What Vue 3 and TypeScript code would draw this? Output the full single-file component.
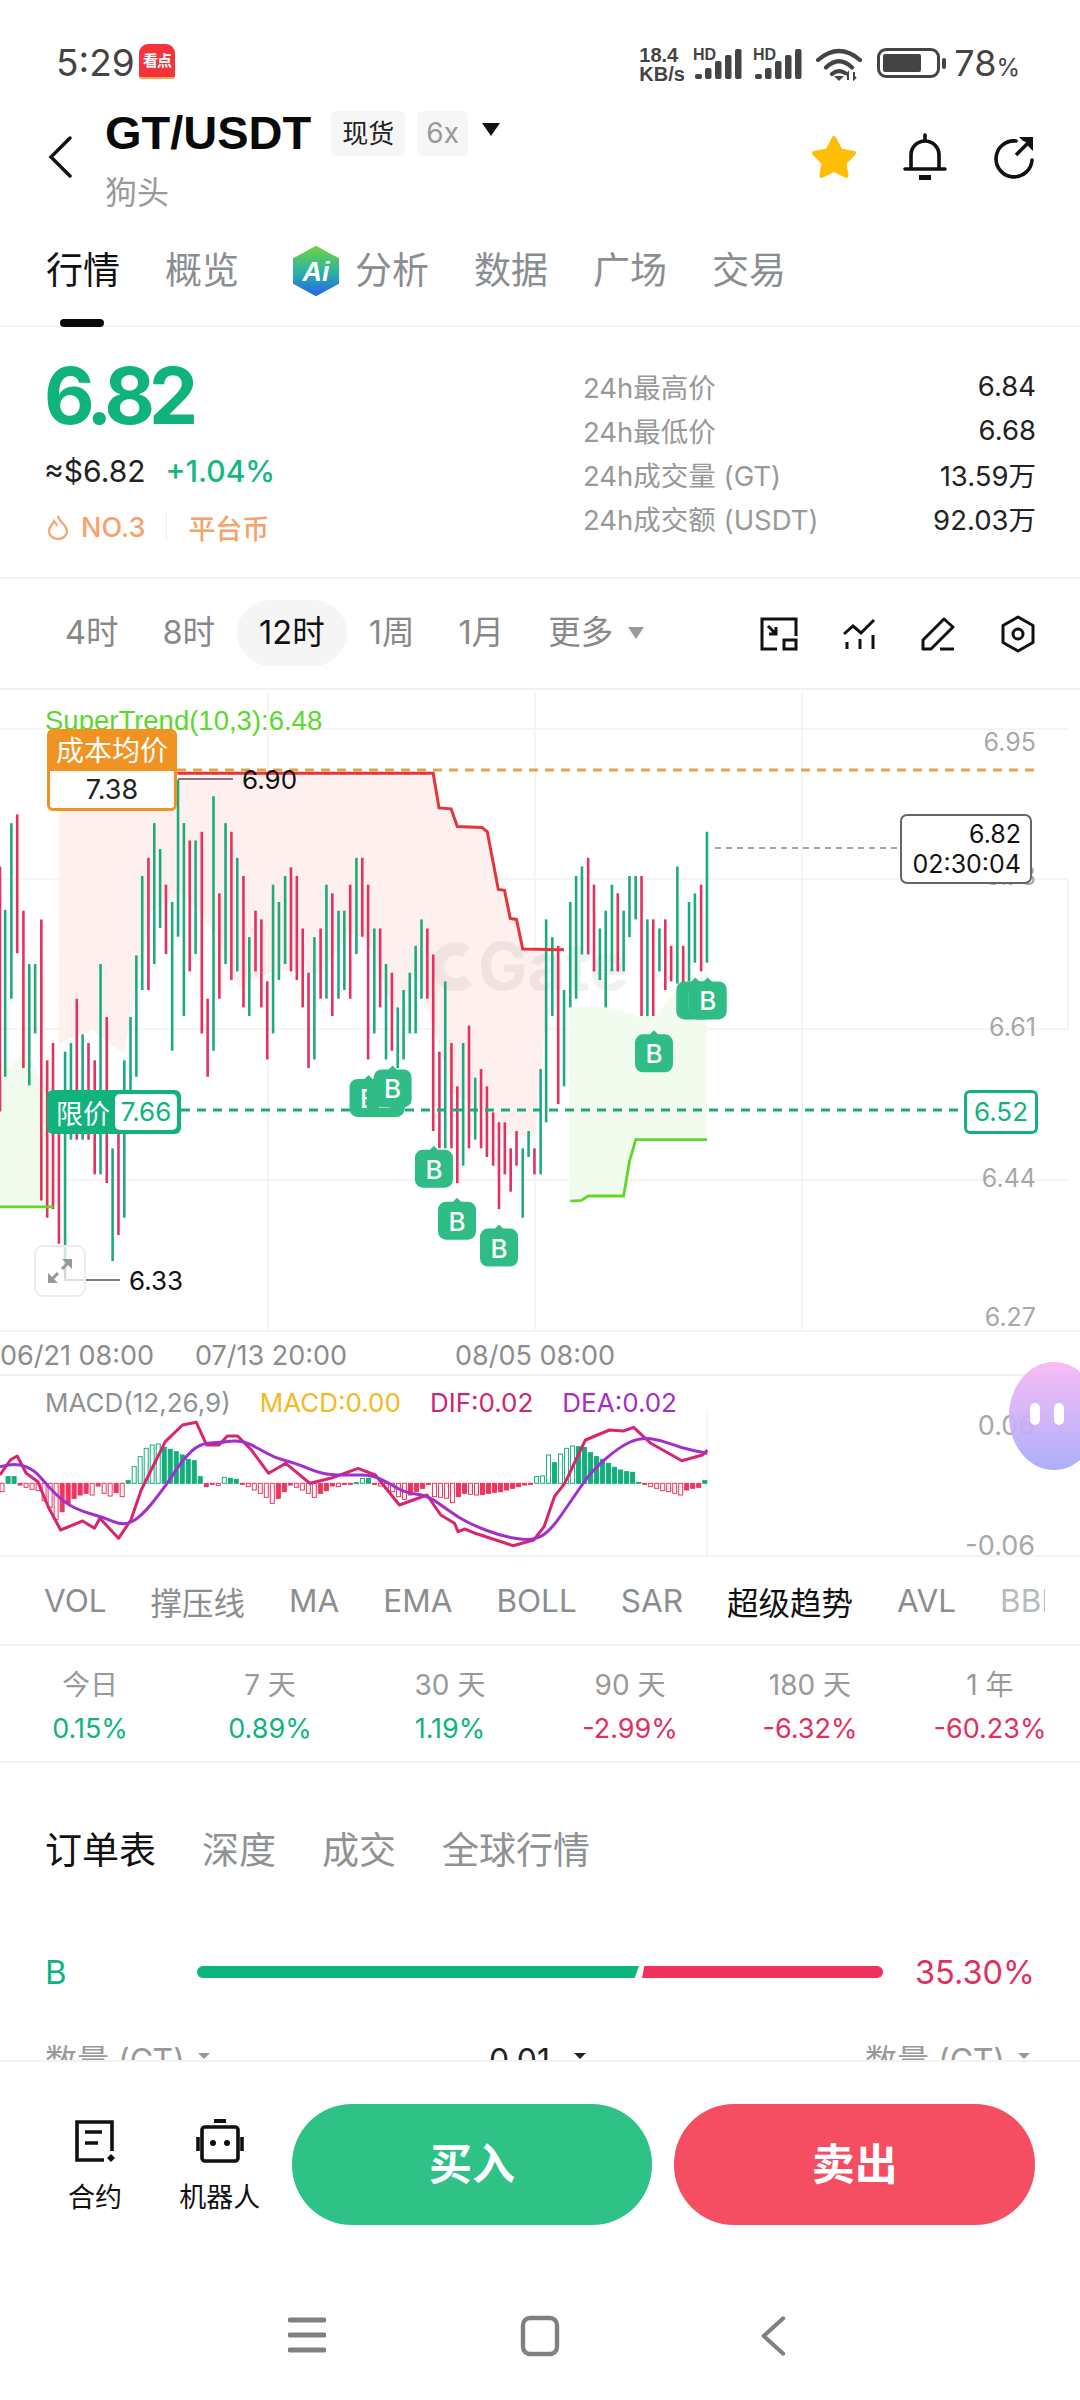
<script setup lang="ts">
type Candle = [number, number, number, number]

// [x, top, bottom, 1 = green / 0 = red] in chart sample units
const raw: Candle[] = [
  [0,430,995,0],[15,530,915,1],[33,330,735,1],[50,310,630,0],[68,532,895,0],[85,655,935,1],[102,655,815,1],[120,552,1200,0],
  [137,877,1240,0],[154,837,1220,0],[171,1040,1300,0],[189,857,1380,1],[206,837,1060,1],[223,735,1060,0],[240,817,1060,1],[257,837,1060,0],
  [275,877,1140,0],[292,655,1140,1],[310,777,1160,0],[327,1080,1340,1],[344,1040,1280,0],[361,877,1240,1],[379,777,1000,1],[396,635,915,1],
  [413,452,715,1],[431,410,715,0],[448,330,655,1],[465,390,572,1],[482,472,632,0],[500,512,855,1],[517,230,592,1],[534,330,775,1],
  [551,370,672,0],[568,370,632,1],[586,350,815,0],[603,735,915,0],[620,268,855,1],[637,492,735,0],[655,330,655,1],[672,350,692,0],
  [689,410,672,1],[707,452,755,0],[724,593,775,1],[742,532,672,0],[759,552,755,0],[776,695,875,0],[793,472,815,1],[810,512,692,1],
  [828,452,655,1],[845,432,672,0],[862,452,692,0],[879,573,755,0],[896,675,895,0],[913,593,875,1],[931,573,735,0],[948,472,735,1],
  [965,492,775,0],[983,532,735,1],[1000,532,715,1],[1017,472,735,0],[1035,410,632,1],[1052,410,592,0],[1069,472,875,0],[1087,573,815,1],
  [1104,573,755,0],[1121,655,875,1],[1138,675,855,0],[1155,755,895,1],[1172,715,875,1],[1190,675,815,1],[1207,613,815,1],[1224,552,735,1],
  [1241,573,735,0],[1258,633,1040,0],[1276,857,1080,0],[1293,695,1080,1],[1311,837,1080,0],[1328,937,1160,0],[1345,837,1120,1],[1362,797,1080,0],
  [1380,917,1060,1],[1397,897,1080,0],[1414,937,1100,0],[1432,997,1120,0],[1449,1020,1220,0],[1466,1020,1140,0],[1483,1080,1180,0],[1500,1040,1120,0],
  [1518,1080,1240,1],[1535,1040,1100,1],[1552,1080,1140,0],[1570,897,1140,1],[1586,552,1020,1],[1604,593,775,1],[1621,613,978,0],[1638,715,937,1],
  [1656,512,755,1],[1673,452,735,1],[1690,430,633,1],[1708,410,633,0],[1725,472,672,0],[1742,573,692,1],[1759,532,755,1],[1777,472,672,1],
  [1794,492,672,0],[1811,532,672,1],[1828,452,593,1],[1846,452,552,1],[1863,452,775,0],[1880,552,775,1],[1897,552,775,0],[1915,573,672,1],
  [1932,552,715,0],[1949,613,695,0],[1967,430,700,1],[1984,613,700,0],[2001,512,695,1],[2018,492,652,1],[2036,472,672,0],[2053,350,652,1],
]

const sx = (x: number): number => x / 2.904
const sy = (y: number): number => 680 + y / 2.306

const candles = raw.map(([x, t, b, g]) => ({
  x: sx(x),
  y1: sy(t),
  y2: sy(b),
  color: g ? '#1DAB7D' : '#E4315F',
}))

const line = (p: number[][], fx: (n: number) => number, fy: (n: number) => number): string =>
  p.map(([x, y]) => `${fx(x).toFixed(1)},${fy(y).toFixed(1)}`).join(' ')

const redLine = line(
  [[515,215],[1258,215],[1275,295],[1310,297],[1328,338],[1400,340],[1415,350],[1447,483],[1465,485],[1482,550],[1500,552],[1518,620],[1638,622]],
  sx, sy,
)
const greenLineL = line([[0,1215],[155,1215]], sx, sy)
const greenLineR = line(
  [[1656,1202],[1688,1200],[1708,1190],[1811,1190],[1828,1110],[1846,1060],[2053,1060]],
  sx, sy,
)

const fx9 = (x: number): number => x / 2.178
const fy9 = (y: number): number => 760 + y / 3
const pinkEdge = line(
  [[1230,568],[1190,570],[1190,760],[1165,1130],[1090,1120],[1040,1040],[985,1000],[945,800],[905,640],[860,760],[800,540],[760,520],[700,640],[600,630],[520,680],[470,520],[400,400],[330,450],[295,700],[270,880],[200,810],[128,850]],
  fx9, fy9,
)
const pinkFill = `${sx(172).toFixed(1)},${sy(215).toFixed(1)} ${redLine} ${pinkEdge}`
const greenFillL = line([[0,950],[50,880],[100,980],[115,1342],[0,1342]], fx9, fy9)
const greenFillR = line(
  [[1240,740],[1320,740],[1395,770],[1425,770],[1470,700],[1540,640],[1540,1138],[1385,1138],[1358,1308],[1280,1308],[1240,1324]],
  fx9, fy9,
)

const gridY = [729, 879, 1029, 1180]
const gridX = [268, 535, 802]
const axis = [
  { t: '6.95', y: 742 },
  { t: '6.61', y: 1027 },
  { t: '6.44', y: 1178 },
  { t: '6.27', y: 1317 },
]

const badges = [
  [1015,920],[1065,920],[1085,898],[1205,1083],[1272,1203],[1394,1265],[1844,817],[1964,695],[2000,695],
].map(([x, y]) => ({ x: sx(x), y: sy(y) }))

// MACD panel, sample coordinates
const mx = (x: number): number => x / 1.452
const my = (y: number): number => y / 3
const dif = line(
  [[0,345],[15,300],[25,288],[38,340],[55,365],[70,440],[88,510],[120,483],[137,505],[145,475],[172,535],[190,480],[205,390],[240,245],[265,195],[285,187],[300,255],[318,255],[330,228],[345,228],[365,270],[390,340],[415,310],[450,370],[480,355],[520,325],[545,345],[580,435],[600,420],[620,405],[640,465],[660,490],[665,515],[675,507],[690,520],[745,557],[775,540],[790,500],[805,410],[820,370],[850,240],[885,210],[905,213],[920,202],[945,250],[990,302],[1020,285],[1027,270]],
  mx, my,
)
const deaPts = [[0,320],[25,310],[50,330],[70,380],[95,430],[120,455],[150,472],[180,498],[205,470],[240,380],[265,300],[290,250],[320,248],[350,240],[375,265],[400,295],[430,310],[470,345],[510,345],[540,345],[565,370],[590,400],[620,405],[650,450],[680,490],[730,530],[775,543],[800,510],[830,420],[860,330],[900,260],[930,232],[960,240],[990,265],[1027,280]]
const dea = deaPts.reduce((d, [x, y], i) => {
  if (i === 0) return `M${mx(x).toFixed(1)} ${my(y).toFixed(1)}`
  const [px, py] = deaPts[i - 1]
  const cx = (mx(x) + mx(px)) / 2
  const cy = (my(y) + my(py)) / 2
  return `${d}Q${mx(px).toFixed(1)} ${my(py).toFixed(1)} ${cx.toFixed(1)} ${cy.toFixed(1)}`
}, '') + `L${mx(1027).toFixed(1)} ${my(280).toFixed(1)}`
const histRaw = [
  -25,20,20,-5,-12,-18,-22,-52,-72,-108,-85,-60,-45,-35,-30,-35,-8,-30,-38,-28,-40,8,50,80,105,115,118,108,102,95,85,72,68,20,-10,-1,-6,18,15,12,
  -2,-10,-20,-30,-42,-60,-45,-25,-5,-12,-20,-30,-42,-30,-22,-8,-10,-3,-1,2,15,15,-3,-8,-15,-25,-40,-48,-35,-25,-15,-3,-40,-42,-45,-58,-40,-30,-33,-35,
  -34,-30,-27,-25,-20,-15,-10,-5,-3,20,22,85,62,88,105,112,110,108,92,80,72,60,48,40,35,33,3,-1,-10,-15,-22,-25,-30,-35,-20,-15,-12,8,
]
const hist = histRaw.map((h, i) => {
  const prev = i ? Math.abs(histRaw[i - 1]) : 0
  const hollow = Math.abs(h) > prev
  const top = h > 0 ? 370 - h : 370
  const color = h > 0 ? '#12AE7C' : '#EE3560'
  return {
    x: mx(i * 8.72 + 3) - 2,
    y: my(top),
    h: Math.abs(h) / 3,
    fill: hollow ? '#fff' : color,
    stroke: color,
  }
})

const tabs = ['概览', '分析', '数据', '广场', '交易']
const stats = [
  { l: '24h最高价', v: '6.84' },
  { l: '24h最低价', v: '6.68' },
  { l: '24h成交量 (GT)', v: '13.59万' },
  { l: '24h成交额 (USDT)', v: '92.03万' },
]
const indicators = ['VOL', '撑压线', 'MA', 'EMA', 'BOLL', 'SAR', '超级趋势', 'AVL', 'BBI']
const returns = [
  { l: '今日', v: '0.15%', up: true },
  { l: '7 天', v: '0.89%', up: true },
  { l: '30 天', v: '1.19%', up: true },
  { l: '90 天', v: '-2.99%', up: false },
  { l: '180 天', v: '-6.32%', up: false },
  { l: '1 年', v: '-60.23%', up: false },
]
</script>

<template>
  <div class="page">
    <div class="status">
      <span class="time">5:29</span>
      <div class="app-badge"><span>看点</span></div>
      <div class="status-right">
        <div class="speed"><span>18.4</span><span>KB/s</span></div>
        <svg class="sig" viewBox="0 0 50 32" width="50" height="32">
          <text x="0" y="12" class="hd">HD</text>
          <rect x="2" y="26" width="7" height="5" rx="2" />
          <rect x="12" y="20" width="6.5" height="11" rx="2" />
          <rect x="22" y="13" width="6.5" height="18" rx="2" />
          <rect x="32" y="7" width="6.5" height="24" rx="2" />
          <rect x="42" y="1" width="6.5" height="30" rx="2" />
        </svg>
        <svg class="sig" viewBox="0 0 50 32" width="50" height="32">
          <text x="0" y="12" class="hd">HD</text>
          <rect x="2" y="26" width="7" height="5" rx="2" />
          <rect x="12" y="20" width="6.5" height="11" rx="2" />
          <rect x="22" y="13" width="6.5" height="18" rx="2" />
          <rect x="32" y="7" width="6.5" height="24" rx="2" />
          <rect x="42" y="1" width="6.5" height="30" rx="2" />
        </svg>
        <svg class="wifi" viewBox="0 0 46 34" width="46" height="34">
          <path d="M2 13Q23-5 44 13M10 20.500Q23 8 36 20.500M16 27Q22 22 29 26" fill="none" stroke="#444" stroke-width="4.200" stroke-linecap="round" />
          <path d="M18 29h10l-5 5z" fill="#444" />
          <path d="M32 33v-7l-2 2M38 25v7l2-2" fill="none" stroke="#444" stroke-width="2" />
        </svg>
        <div class="battery"><i></i></div>
        <b class="nub"></b>
        <span class="pct">78<small>%</small></span>
      </div>
    </div>

    <div class="header">
      <svg class="back" viewBox="0 0 26 42" width="26" height="42">
        <path d="M23 2L4 21l19 19" fill="none" stroke="#111" stroke-width="3.400" stroke-linecap="round" />
      </svg>
      <div class="title-block">
        <div class="title-line">
          <span class="pair">GT/USDT</span>
          <span class="chip">现货</span>
          <span class="chip gray">6x</span>
          <i class="caret"></i>
        </div>
        <div class="cn-name">狗头</div>
      </div>
      <div class="head-icons">
        <svg viewBox="0 0 48 48" width="48" height="48">
          <polygon points="24,5 30.500,17.500 44,20 34.500,30 36.500,43 24,37 11.500,43 13.500,30 4,20 17.500,17.500" fill="#FDBE05" stroke="#FDBE05" stroke-width="4" stroke-linejoin="round" />
        </svg>
        <svg viewBox="0 0 44 48" width="44" height="48">
          <path d="M22 2v5M8 36V22a14 14 0 0 1 28 0v14M2 36h40" fill="none" stroke="#111" stroke-width="3.600" stroke-linecap="round" />
          <rect x="16" y="42" width="12" height="5" fill="#111" />
        </svg>
        <svg viewBox="0 0 44 44" width="44" height="44">
          <path d="M24 6A18 18 0 1 0 40 25" fill="none" stroke="#111" stroke-width="3.600" stroke-linecap="round" />
          <path d="M24 20L36 8" stroke="#111" stroke-width="3.600" />
          <path d="M27 2H41V16L36 11 34 7 31 6z" fill="#111" />
        </svg>
      </div>
    </div>

    <div class="tabs">
      <span class="tab active">行情<i class="ind"></i></span>
      <template v-for="t in tabs" :key="t">
        <svg v-if="t === '分析'" class="ai" viewBox="0 0 48 50" width="48" height="50">
          <defs>
            <linearGradient id="aig" x1="0" y1="0" x2="0" y2="1">
              <stop offset="0" stop-color="#6FD13F" />
              <stop offset="0.5" stop-color="#2CB5A0" />
              <stop offset="1" stop-color="#2468E8" />
            </linearGradient>
          </defs>
          <path d="M24 1L46 13V37L24 49 2 37V13z" fill="url(#aig)" stroke="url(#aig)" stroke-width="2" stroke-linejoin="round" />
          <text x="24" y="35" class="ai-text">Ai</text>
        </svg>
        <span class="tab">{{ t }}</span>
      </template>
    </div>

    <div class="summary">
      <div class="sum-left">
        <div class="big">6.82</div>
        <div class="sub"><span class="usd">≈$6.82</span><span class="chg">+1.04%</span></div>
        <div class="rank">
          <svg viewBox="0 0 22 26" width="22" height="26">
            <path d="M11 2C12 8 20 11 20 17A9 8 0 0 1 2 17C2 12 6 11 7 7 9 9 10 10 10 12" fill="none" stroke="#F5A36C" stroke-width="2.200" />
          </svg>
          <span class="no">NO.3</span>
          <i class="rank-sep"></i>
          <span class="no">平台币</span>
        </div>
      </div>
      <div class="sum-right">
        <div v-for="s in stats" :key="s.l" class="stat">
          <span class="stat-l">{{ s.l }}</span><span class="stat-v">{{ s.v }}</span>
        </div>
      </div>
    </div>

    <div class="timebar">
      <span class="tf">4时</span>
      <span class="tf">8时</span>
      <span class="tf on">12时</span>
      <span class="tf">1周</span>
      <span class="tf">1月</span>
      <span class="tf more">更多<i class="caret small"></i></span>
      <div class="tools">
        <svg viewBox="0 0 38 34" width="38" height="34">
          <path d="M17 32H2V2H36V19M8 9l8 8M16 10v7H9" fill="none" stroke="#111" stroke-width="3" />
          <rect x="24" y="23" width="12" height="9" fill="none" stroke="#111" stroke-width="3" />
        </svg>
        <svg viewBox="0 0 34 34" width="34" height="34">
          <path d="M2 17L11 9l8 7L32 3" fill="none" stroke="#111" stroke-width="3" />
          <path d="M5 25v7M18 22v10M31 18v14" stroke="#111" stroke-width="3" />
        </svg>
        <svg viewBox="0 0 36 34" width="36" height="34">
          <path d="M3 23L24 2 33 10 11 32H3zM20 32H34" fill="none" stroke="#111" stroke-width="3" stroke-linejoin="round" />
        </svg>
        <svg viewBox="0 0 36 38" width="36" height="38">
          <path d="M18 2L33 10.500V27.500L18 36 3 27.500V10.500z" fill="none" stroke="#111" stroke-width="3" stroke-linejoin="round" />
          <circle cx="18" cy="19" r="5" fill="none" stroke="#111" stroke-width="3" />
        </svg>
      </div>
    </div>

    <div class="chart">
      <svg class="chart-svg" viewBox="0 690 1080 640" width="1080" height="640">
        <line v-for="y in gridY" :key="'gy' + y" x1="0" x2="1068" :y1="y" :y2="y" class="grid" />
        <line v-for="x in gridX" :key="'gx' + x" :x1="x" :x2="x" y1="692" y2="1330" class="grid" />
        <line x1="1068" x2="1068" y1="879" y2="1029" class="grid" />
        <polygon :points="pinkFill" fill="#FEF0EF" />
        <polygon :points="greenFillL" fill="#F2FCEE" />
        <polygon :points="greenFillR" fill="#F2FCEE" />
        <path d="M466 952A18 18 0 1 0 468 980" class="mark-logo" />
        <text x="478" y="990" class="mark">Gate</text>
        <text x="45" y="730" class="st">SuperTrend(10,3):6.48</text>
        <line v-for="(c, i) in candles" :key="i" :x1="c.x" :x2="c.x" :y1="c.y1" :y2="c.y2" :stroke="c.color" stroke-width="2.600" />
        <polyline :points="redLine" class="red-line" />
        <polyline :points="greenLineL" class="green-line" />
        <polyline :points="greenLineR" class="green-line" />
        <line x1="177" x2="1036" y1="770" y2="770" class="dash-o" />
        <line x1="181" x2="964" y1="1110" y2="1110" class="dash-g" />
        <line x1="715" x2="900" y1="848" y2="848" class="dash-k" />
        <path d="M178 779H233" class="lead" />
        <path d="M65 1260V1280H120" class="lead" />
        <text x="242" y="789" class="val">6.90</text>
        <text x="129" y="1290" class="val">6.33</text>
        <text v-for="a in axis" :key="a.t" x="1036" :y="a.y + 9" class="ax">{{ a.t }}</text>
        <text x="1036" y="885" class="ax">6.78</text>
        <g v-for="(b, i) in badges" :key="'b' + i">
          <path :d="`M${b.x + 14} ${b.y + 1}L${b.x + 19} ${b.y - 4}L${b.x + 24} ${b.y + 1}Z`" fill="#2FBC85" />
          <rect :x="b.x" :y="b.y" width="38" height="38" rx="8" fill="#2FBC85" />
          <text :x="b.x + 19" :y="b.y + 29" class="b-text">B</text>
        </g>
      </svg>

      <div class="cost-tag">
        <div class="cost-top">成本均价</div>
        <div class="cost-val">7.38</div>
      </div>
      <div class="limit-tag">
        <span class="limit-l">限价</span>
        <span class="limit-v">7.66</span>
      </div>
      <div class="limit-right">6.52</div>
      <div class="now-tag"><span>6.82</span><span>02:30:04</span></div>
      <div class="expand">
        <svg viewBox="0 0 28 28" width="28" height="28">
          <path d="M16 12L25 3M3 25l9-9" stroke="#999" stroke-width="3" />
          <path d="M16 2H26V12zM2 16V26H12z" fill="#999" />
        </svg>
      </div>
    </div>

    <div class="dates">
      <span class="d1">06/21 08:00</span>
      <span class="d2">07/13 20:00</span>
      <span class="d3">08/05 08:00</span>
    </div>

    <div class="macd">
      <div class="macd-legend">
        <span class="mg">MACD(12,26,9)</span>
        <span class="mo">MACD:0.00</span>
        <span class="mp">DIF:0.02</span>
        <span class="mv">DEA:0.02</span>
      </div>
      <svg class="macd-svg" viewBox="0 0 1080 197" width="1080" height="197">
        <line x1="707" x2="707" y1="50" y2="197" class="grid" />
        <rect v-for="(h, i) in hist" :key="i" :x="h.x" :y="h.y" width="4" :height="Math.max(h.h, 1)" :fill="h.fill" :stroke="h.stroke" stroke-width="1" />
        <polyline :points="dif" class="dif" />
        <path :d="dea" class="dea" />
        <text x="1035" y="75" class="ax big-ax">0.06</text>
        <text x="1035" y="195" class="ax big-ax">-0.06</text>
      </svg>
    </div>

    <div class="indicators">
      <span v-for="n in indicators" :key="n" :class="['ind-item', { current: n === '超级趋势' }]">{{ n }}</span>
    </div>

    <div class="returns">
      <div v-for="r in returns" :key="r.l" class="ret">
        <span class="ret-l">{{ r.l }}</span>
        <span :class="['ret-v', r.up ? 'up' : 'down']">{{ r.v }}</span>
      </div>
    </div>

    <div class="book">
      <div class="book-tabs">
        <span class="bt on">订单表</span>
        <span class="bt">深度</span>
        <span class="bt">成交</span>
        <span class="bt">全球行情</span>
      </div>
      <div class="ratio">
        <span class="ratio-b">B</span>
        <div class="ratio-bar"><i class="bar-g"></i><i class="bar-r"></i></div>
        <span class="ratio-v">35.30%</span>
      </div>
      <div class="book-head">
        <span>数量 (GT)<i class="caret tiny"></i></span>
        <span class="mid">0.01<i class="caret tiny dark"></i></span>
        <span>数量 (GT)<i class="caret tiny"></i></span>
      </div>
    </div>

    <div class="actions">
      <div class="act">
        <svg viewBox="0 0 42 44" width="42" height="44">
          <path d="M30 41H3V3H38V32" fill="none" stroke="#111" stroke-width="3.600" />
          <path d="M11 13H28M11 24H24" stroke="#111" stroke-width="3.600" />
          <path d="M37 35L41 39 37 43 33 39z" fill="#111" />
        </svg>
        <span>合约</span>
      </div>
      <div class="act">
        <svg viewBox="0 0 48 44" width="48" height="44">
          <rect x="18" y="0" width="12" height="4" fill="#111" />
          <rect x="6" y="8" width="36" height="34" rx="3" fill="none" stroke="#111" stroke-width="3.600" />
          <path d="M2 18V32M46 18V32" stroke="#111" stroke-width="3.600" />
          <circle cx="17" cy="24" r="3" fill="#111" />
          <circle cx="31" cy="24" r="3" fill="#111" />
        </svg>
        <span>机器人</span>
      </div>
      <div class="btn buy">买入</div>
      <div class="btn sell">卖出</div>
    </div>

    <div class="nav">
      <svg viewBox="0 0 38 38" width="38" height="38">
        <path d="M2 4H36M2 19H36M2 34H36" stroke="#808080" stroke-width="5" stroke-linecap="round" />
      </svg>
      <svg viewBox="0 0 40 42" width="40" height="42">
        <rect x="3" y="3" width="34" height="36" rx="7" fill="none" stroke="#808080" stroke-width="4.400" />
      </svg>
      <svg viewBox="0 0 28 42" width="26" height="42">
        <path d="M25 2L4 21l21 19" fill="none" stroke="#808080" stroke-width="4.400" stroke-linecap="round" stroke-linejoin="round" />
      </svg>
    </div>

    <div class="bubble"><i></i><i></i></div>
  </div>
</template>

<style scoped>
.page {
  position: relative;
  width: 1080px;
  height: 2400px;
  overflow: hidden;
  background: #fff;
  color: #111;
  font-family: Inter, "Noto Sans CJK SC", sans-serif;
  display: flex;
  flex-direction: column;
}
svg { display: block; flex: none; }
i { display: block; }

.status {
  height: 100px;
  flex: none;
  display: flex;
  align-items: flex-start;
  padding: 44px 60px 0 56px;
  box-sizing: border-box;
  color: #444;
}
.time { font-size: 37px; line-height: 38px; width: 83px; color: #444; }
.app-badge {
  width: 36px;
  height: 33px;
  border-radius: 9px 9px 3px 3px;
  background: #F4333B;
  border-bottom: 2px solid #F8A64A;
  display: flex;
  align-items: center;
  justify-content: center;
  color: #fff;
  font-size: 15px;
  font-weight: 700;
  line-height: 1;
  white-space: nowrap;
}
.app-badge span { letter-spacing: -1px; }
.status-right { margin-left: auto; display: flex; align-items: flex-start; }
.speed {
  display: flex;
  flex-direction: column;
  font: 700 20px/19px "Liberation Sans", sans-serif;
  width: 54px;
  margin-top: 2px;
  color: #444;
}
.sig { margin-top: 4px; margin-right: 10px; fill: #444; }
.hd { font: 700 16px "Liberation Sans", sans-serif; fill: #444; }
.wifi { margin: 3px 15px 0 3px; }
.battery {
  width: 63px;
  height: 30px;
  box-sizing: border-box;
  border: 3px solid #444;
  border-radius: 9px;
  margin-top: 4px;
  padding: 3px;
}
.battery i { width: 38px; height: 18px; background: #444; border-radius: 2px; }
.nub { width: 4px; height: 11px; background: #444; border-radius: 2px; margin: 14px 8px 0 2px; }
.pct { font-size: 36px; line-height: 38px; margin-top: 0; color: #444; font-weight: 400; }
.pct small { font-size: 24px; }

.header {
  height: 130px;
  flex: none;
  position: relative;
  display: flex;
  padding-left: 47px;
  box-sizing: border-box;
}
.back { margin-top: 36px; margin-right: 32px; }
.title-line { display: flex; align-items: center; height: 58px; margin-top: 4px; }
.pair { font: 700 47px/58px "Liberation Sans", sans-serif; color: #0a0a0a; margin-right: 20px; }
.chip {
  height: 45px;
  line-height: 45px;
  padding: 0 11px;
  border-radius: 6px;
  background: #F6F6F6;
  font-size: 26px;
  color: #222;
  margin-right: 12px;
}
.chip.gray { color: #999; font-size: 28px; padding: 0 9px; }
.caret {
  width: 0;
  height: 0;
  border-left: 9px solid transparent;
  border-right: 9px solid transparent;
  border-top: 13px solid #111;
  margin-left: 2px;
  margin-bottom: 8px;
}
.caret.small { border-top-color: #999; border-left-width: 8px; border-right-width: 8px; border-top-width: 12px; margin: 0 0 0 15px; }
.caret.tiny {
  display: inline-block;
  border-left-width: 6px;
  border-right-width: 6px;
  border-top: 6px solid #999;
  margin: 0 0 0 13px;
  vertical-align: 13px;
}
.caret.tiny.dark { border-top-color: #222; margin-left: 24px; }
.cn-name { font-size: 32px; line-height: 40px; color: #999; margin-top: 11px; }
.head-icons {
  position: absolute;
  left: 810px;
  top: 33px;
  width: 226px;
  display: flex;
  align-items: center;
  justify-content: space-between;
}

.tabs {
  height: 97px;
  flex: none;
  box-sizing: border-box;
  border-bottom: 2px solid #F4F4F4;
  padding: 0 0 0 46px;
  display: flex;
  align-items: flex-start;
}
.tab {
  position: relative;
  font-size: 37px;
  line-height: 44px;
  margin-top: 19px;
  margin-right: 45px;
  color: #8A8E91;
  white-space: nowrap;
}
.tab.active { color: #111; }
.ind { position: absolute; left: 14px; top: 70px; width: 44px; height: 8px; border-radius: 4px; background: #0a0a0a; }
.ai { margin: 16px 15px 0 8px; }
.ai-text { font: italic 700 27px "Liberation Sans", sans-serif; fill: #fff; text-anchor: middle; }

.summary {
  height: 252px;
  flex: none;
  box-sizing: border-box;
  border-bottom: 2px solid #F3F3F3;
  padding: 0 44px;
  display: flex;
  justify-content: space-between;
}
.big {
  font-size: 78px;
  line-height: 80px;
  font-weight: 700;
  color: #10B27E;
  margin-top: 29px;
  letter-spacing: -6px;
}
.sub { display: flex; align-items: center; margin-top: 15px; height: 40px; }
.usd { font-size: 30px; color: #222; margin-right: 20px; }
.chg { font-size: 30px; color: #15B683; font-weight: 500; }
.rank { display: flex; align-items: center; margin-top: 21px; height: 30px; margin-left: 3px; }
.no { font-size: 27px; color: #F5A36C; font-weight: 500; }
.rank svg { margin-right: 12px; }
.rank-sep { width: 1px; height: 28px; background: #eee; margin: 0 21px; }
.sum-right { width: 453px; padding-top: 37px; }
.stat {
  display: flex;
  justify-content: space-between;
  align-items: center;
  height: 44px;
  font-size: 27.5px;
}
.stat-l { color: #999; }
.stat-v { color: #222; }

.timebar {
  height: 111px;
  flex: none;
  box-sizing: border-box;
  border-bottom: 2px solid #F3F3F3;
  padding: 0 44px 0 43px;
  display: flex;
  align-items: center;
}
.tf {
  height: 66px;
  line-height: 66px;
  padding: 0 22px;
  margin-top: -2px;
  font-size: 32.5px;
  color: #888;
  white-space: nowrap;
  display: flex;
  align-items: center;
}
.tf.on { background: #F5F5F5; border-radius: 33px; color: #111; }
.tools { margin-left: auto; margin-right: 0; display: flex; align-items: center; gap: 44px; }

.chart { position: relative; height: 640px; flex: none; border-bottom: 2px solid #F5F5F5; box-sizing: content-box; }
.chart-svg { position: absolute; left: 0; top: 0; }
.grid { stroke: #F2F2F2; stroke-width: 1.500; }
.mark { font: 700 66px Inter, sans-serif; fill: #000; opacity: 0.05; }
.mark-logo { fill: none; stroke: #000; stroke-width: 13; opacity: 0.05; }
.st { font: 400 27.5px "Liberation Sans", sans-serif; fill: #5BD82D; }
.red-line { fill: none; stroke: #E3353A; stroke-width: 3; }
.green-line { fill: none; stroke: #5FD72C; stroke-width: 2.800; }
.dash-o { stroke: #E3A24B; stroke-width: 3; stroke-dasharray: 9 7; }
.dash-g { stroke: #1DAB7D; stroke-width: 3; stroke-dasharray: 9 7; }
.dash-k { stroke: #888; stroke-width: 1.500; stroke-dasharray: 6 5; }
.lead { fill: none; stroke: #555; stroke-width: 1.500; }
.val { font: 400 26px Inter, sans-serif; fill: #111; }
.ax { font: 400 25px Inter, sans-serif; fill: #A8A8A8; text-anchor: end; }
.big-ax { font-size: 27px; }
.b-text { font: 500 26px Inter, sans-serif; fill: #fff; text-anchor: middle; }

.cost-tag {
  position: absolute;
  left: 47px;
  top: 39px;
  width: 130px;
  height: 82px;
  box-sizing: border-box;
  border: 3px solid #F19322;
  border-radius: 6px;
  background: #fff;
  overflow: hidden;
  text-align: center;
}
.cost-top { background: #F19322; color: #fff; font-size: 28px; line-height: 39px; height: 39px; white-space: nowrap; }
.cost-val { font-size: 27px; line-height: 38px; color: #222; }
.limit-tag {
  position: absolute;
  left: 47px;
  top: 400px;
  width: 134px;
  height: 44px;
  box-sizing: border-box;
  background: #10B27E;
  border-radius: 6px;
  display: flex;
  align-items: center;
  padding: 4px;
}
.limit-l { width: 64px; text-align: center; color: #fff; font-size: 27px; }
.limit-v {
  flex: 1;
  height: 36px;
  line-height: 36px;
  background: #fff;
  border-radius: 5px;
  color: #10B27E;
  text-align: center;
  font-size: 26px;
}
.limit-right {
  position: absolute;
  left: 964px;
  top: 400px;
  width: 74px;
  height: 44px;
  box-sizing: border-box;
  border: 3px solid #10B27E;
  border-radius: 6px;
  background: #fff;
  color: #10B27E;
  font-size: 26px;
  line-height: 38px;
  text-align: center;
}
.now-tag {
  position: absolute;
  left: 900px;
  top: 124px;
  width: 132px;
  height: 70px;
  box-sizing: border-box;
  border: 2px solid #666;
  border-radius: 7px;
  background: #fff;
  display: flex;
  flex-direction: column;
  align-items: flex-end;
  justify-content: center;
  padding-right: 9px;
  font-size: 25px;
  line-height: 30px;
  color: #111;
}
.expand {
  position: absolute;
  left: 34px;
  top: 555px;
  width: 52px;
  height: 52px;
  box-sizing: border-box;
  border: 2px solid #EDEDED;
  border-radius: 9px;
  background: rgba(255, 255, 255, 0.75);
  display: flex;
  align-items: center;
  justify-content: center;
}

.dates {
  height: 44px;
  flex: none;
  box-sizing: border-box;
  border-bottom: 2px solid #F3F3F3;
  padding-top: 4px;
  display: flex;
  align-items: center;
  font-size: 27px;
  color: #8C8C8C;
  white-space: nowrap;
}
.d1 { width: 195px; }
.d2 { width: 260px; }

.macd { position: relative; height: 181px; flex: none; border-bottom: 2px solid #F3F3F3; box-sizing: border-box; }
.macd-svg { position: absolute; left: 0; top: -16px; }
.macd-legend {
  position: absolute;
  left: 45px;
  top: 11px;
  display: flex;
  gap: 29px;
  font-size: 26px;
  line-height: 32px;
  white-space: nowrap;
  z-index: 1;
}
.mg { color: #8F9294; }
.mo { color: #F4B91E; }
.mp { color: #D0246E; }
.mv { color: #A62FC6; }
.dif { fill: none; stroke: #D9246F; stroke-width: 3; stroke-linejoin: round; }
.dea { fill: none; stroke: #A02FCB; stroke-width: 3; stroke-linejoin: round; }

.indicators {
  height: 89px;
  flex: none;
  box-sizing: border-box;
  border-bottom: 2px solid #F3F3F3;
  width: 1080px;
  padding: 0 0 0 44px;
  display: flex;
  align-items: center;
  gap: 44px;
  overflow: hidden;
  font-size: 31.5px;
  color: #8A8E91;
  white-space: nowrap;
}
.ind-item { flex: none; }
.ind-item:last-child { width: 45px; overflow: hidden; opacity: 0.6; }
.ind-item.current { color: #111; }

.returns {
  height: 117px;
  flex: none;
  box-sizing: border-box;
  border-bottom: 2px solid #F3F3F3;
  display: grid;
  grid-template-columns: repeat(6, 180px);
}
.ret { display: flex; flex-direction: column; align-items: center; padding-top: 20px; white-space: nowrap; }
.ret-l { font-size: 28px; line-height: 38px; color: #999; }
.ret-v { font-size: 27px; line-height: 38px; margin-top: 6px; }
.up { color: #10B27E; }
.down { color: #E0305F; }

.book { height: 297px; flex: none; overflow: hidden; padding: 0 50px 0 45px; box-sizing: border-box; }
.book-tabs { display: flex; gap: 46px; margin-top: 65px; height: 46px; align-items: center; }
.bt { font-size: 37px; line-height: 46px; color: #8F9294; white-space: nowrap; }
.bt.on { color: #111; }
.ratio { display: flex; align-items: center; margin-top: 78px; height: 40px; margin-right: -5px; }
.ratio-b { width: 152px; font-size: 33px; color: #10B27E; }
.ratio-bar { width: 686px; display: flex; gap: 3px; height: 12px; }
.bar-g { width: 442px; background: #0CB47E; border-radius: 6px 0 0 6px; clip-path: polygon(0 0, 100% 0, 99% 100%, 0 100%); }
.bar-r { flex: 1; background: #F2305E; border-radius: 0 6px 6px 0; clip-path: polygon(1% 0, 100% 0, 100% 100%, 0 100%); }
.ratio-v { margin-left: auto; font-size: 32.5px; color: #E0305F; }
.book-head {
  display: flex;
  justify-content: space-between;
  margin-top: 49px;
  font-size: 32px;
  line-height: 40px;
  color: #999;
  white-space: nowrap;
}
.book-head .mid { color: #222; }

.actions {
  height: 200px;
  flex: none;
  box-sizing: border-box;
  border-top: 2px solid #F3F3F3;
  display: flex;
  align-items: flex-start;
  padding: 42px 45px 0 0;
  position: relative;
}
.act {
  width: 92px;
  display: flex;
  flex-direction: column;
  align-items: center;
  font-size: 27px;
  line-height: 34px;
  white-space: nowrap;
  margin-top: 15px;
  color: #111;
}
.act:first-child { margin-left: 49px; margin-right: 33px; }
.act svg { margin-bottom: 18px; }
.btn {
  width: 361px;
  height: 121px;
  border-radius: 60px;
  color: #fff;
  font-size: 43px;
  font-weight: 700;
  line-height: 121px;
  text-align: center;
}
.buy { background: #2EC287; margin-left: 26px; }
.sell { background: #F54D62; margin-left: 22px; }

.nav {
  flex: 1;
  display: flex;
  align-items: flex-start;
  padding: 55px 0 0 288px;
  box-sizing: border-box;
}
.nav svg:nth-child(1) { margin-top: 1px; margin-right: 194px; }
.nav svg:nth-child(2) { margin-right: 200px; }

.bubble {
  position: absolute;
  left: 1009px;
  top: 1362px;
  width: 90px;
  height: 108px;
  border-radius: 50%;
  background: linear-gradient(180deg, #F7B8F6, #A7A8FA);
  opacity: 0.92;
  display: flex;
  gap: 14px;
  padding: 41px 0 0 21px;
  box-sizing: border-box;
}
.bubble i { width: 10px; height: 22px; border-radius: 5px; background: #fff; }
</style>
